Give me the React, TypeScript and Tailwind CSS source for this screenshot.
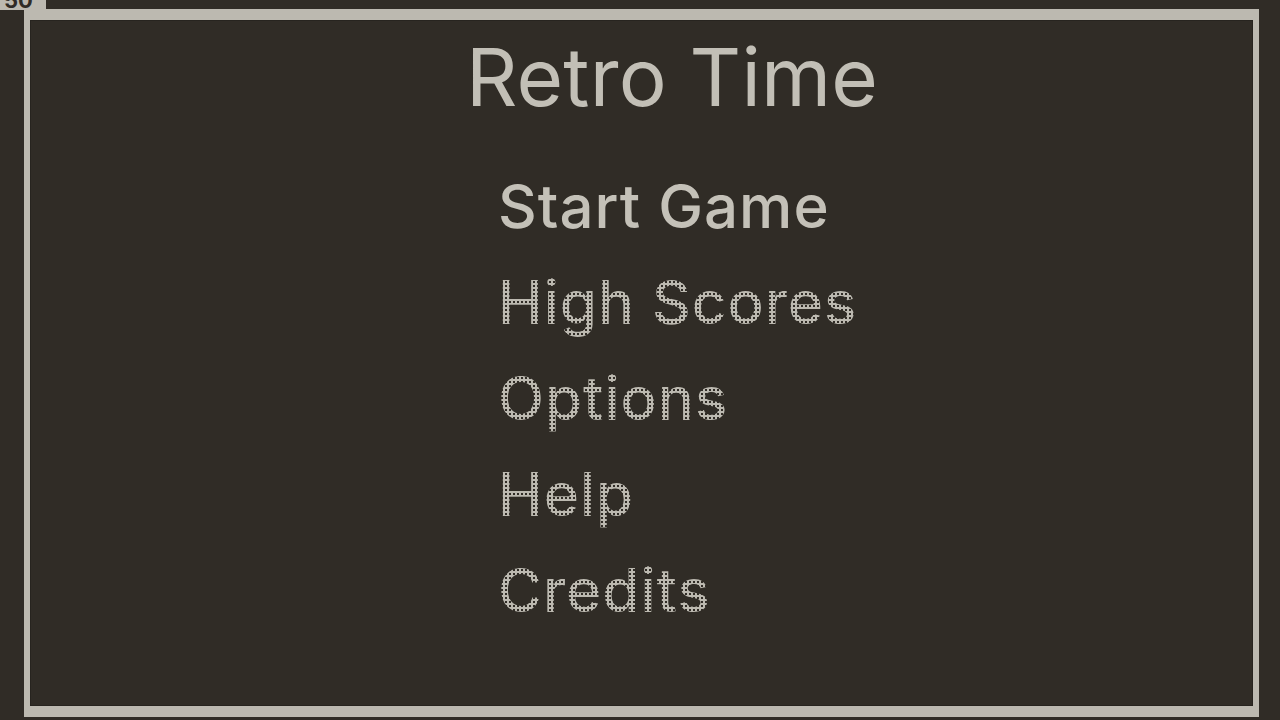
import React from "react";

const dotted =
  "bg-[radial-gradient(circle,#bcb9b0_1.6px,transparent_2px)] bg-[length:4px_4px] bg-clip-text text-transparent";

export default function App() {
  const items = ["High Scores", "Options", "Help", "Credits"];
  return (
    <div
      className="relative w-[1280px] h-[720px] overflow-hidden bg-[#302c26]"
      style={{ fontFamily: "Inter, 'Noto Sans', sans-serif" }}
    >
      <div className="absolute left-0 top-[-10px] w-[46px] h-[20px] bg-[#bcb9b0] text-[#302c26] text-[22px] leading-[20px] font-bold pl-[4px]">
        50
      </div>
      <div className="absolute left-[24px] top-[9px] w-[1235px] h-[708px] border-x-[6px] border-y-[11px] border-[#bcb9b0]">
        <div className="h-full w-full border border-[#27241f] flex flex-col">
          <div className="pl-[435px] pt-[16px] h-[101px] text-[80px] leading-[80px] tracking-[0.2px] text-[#c2bfb6]">
            Retro Time
          </div>
          <div className="pl-[467px] mt-[36px] text-[60px] leading-[96px] text-[#c4c1b8] tracking-[1px] font-medium">
            Start Game
          </div>
          {items.map((t) => (
            <div
              key={t}
              className="pl-[467px] text-[60px] leading-[96px] tracking-[1px] font-medium"
            >
              <span className={dotted}>{t}</span>
            </div>
          ))}
        </div>
      </div>
    </div>
  );
}
